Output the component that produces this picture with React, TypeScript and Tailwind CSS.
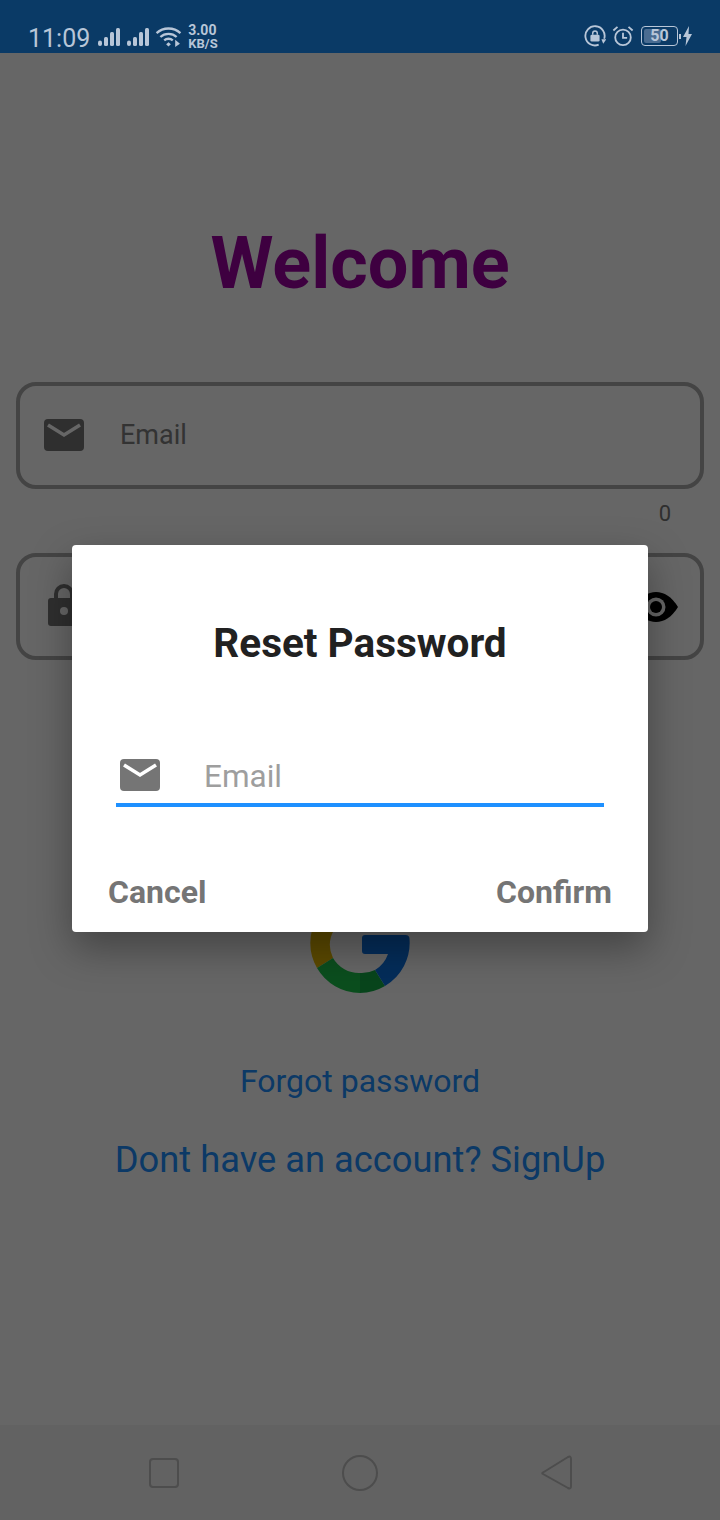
const font = { fontFamily: 'Roboto, sans-serif' }

function MailIcon({ className }: { className?: string }) {
  return (
    <svg viewBox="0 0 40 32" className={className}>
      <rect width="40" height="32" rx="4" fill="#757575" />
      <path d="M4 6l16 10L36 6" fill="none" stroke="#fff" strokeWidth="3.6" />
    </svg>
  )
}

function Signal() {
  return (
    <svg viewBox="0 0 22 18" className="w-[22px] h-[18px]" fill="#b8c6d8">
      <rect x="0" y="12.500" width="4" height="5.500" rx="2" />
      <rect x="6" y="9" width="4" height="9" rx="1.500" />
      <rect x="12" y="4" width="4" height="14" rx="1.500" />
      <rect x="18" y="0" width="4" height="18" rx="1.500" />
    </svg>
  )
}

function StatusBar() {
  return (
    <div className="h-[53px] bg-[#0a3a66] flex items-end justify-between pl-7 pr-7 text-[#b8c6d8]">
      <div className="flex items-end">
        <span className="text-[25px] leading-[28px] font-normal">11:09</span>
        <div className="flex items-center gap-[7px] ml-2 mb-[7px]"><Signal /><Signal /></div>
        <svg viewBox="0 0 28 22" className="w-[27px] h-[21px] ml-[6px] mb-[6px]" fill="none" stroke="#b8c6d8" strokeWidth="2.400">
          <path d="M1.500 7.500c7-6.500 18-6.500 25 0" />
          <path d="M5.500 11.500c4.600-4.300 12.400-4.300 17 0" />
          <path d="M9.500 15c2.500-2.200 6.500-2.200 9 0" />
          <path d="M11.500 19l2.500-2 2.500 2-2.500 2.500z" fill="#b8c6d8" stroke="none" />
          <path d="M21 14.500l5 4-5 3.500z" fill="#b8c6d8" stroke="none" />
        </svg>
        <div className="ml-[6px] mb-[3px] flex flex-col items-start text-[13px] leading-[13px] font-bold">
          <span className="text-[14px]">3.00</span>
          <span>KB/S</span>
        </div>
      </div>
      <div className="flex items-center mb-[6px]">
        <svg viewBox="0 0 24 24" className="w-[22px] h-[22px]" fill="none" stroke="#b8c6d8" strokeWidth="2">
          <path d="M16 21.500A10.500 10.500 0 1 1 22 15" />
          <path d="M19 15.500h5.500l-3.500 5z" fill="#b8c6d8" stroke="none" />
          <rect x="7" y="10.500" width="10" height="7.500" rx="1.500" fill="#b8c6d8" stroke="none" />
          <path d="M9.500 10.500V9a2.500 2.500 0 0 1 5 0v1.500" strokeWidth="1.600" />
        </svg>
        <svg viewBox="0 0 24 24" className="w-[22px] h-[22px] ml-[6px]" fill="none" stroke="#b8c6d8" strokeWidth="2">
          <circle cx="12" cy="13.500" r="8.500" />
          <path d="M12 8.500v5.500h4.500" />
          <path d="M1.500 6L6 2M22.500 6L18 2" />
        </svg>
        <div className="relative ml-[7px] w-[37px] h-5 rounded-[4px] border border-[#b8c6d8] flex items-center justify-center">
          <div className="absolute left-[2px] top-[2px] bottom-[2px] w-[17px] rounded-[2px] bg-[#4a6c91]" />
          <span className="relative text-[16px] leading-5 font-bold">50</span>
        </div>
        <div className="w-[2px] h-[5px] bg-[#b8c6d8] ml-[1px]" />
        <svg viewBox="0 0 9 20" className="w-[9px] h-5 ml-[2px]" fill="#b8c6d8">
          <path d="M6 0L0 11h3.500L2.500 20 9 8H5.500z" />
        </svg>
      </div>
    </div>
  )
}

function GoogleMark() {
  return (
    <svg viewBox="0 0 100 100" className="w-[100px] h-[100px]">
      <path d="M7 25A50 50 0 0 1 87 16L72 30A30 30 0 0 0 24 37z" fill="#e63a2e" />
      <path d="M7 25A50 50 0 0 0 7 75L23 65A30 30 0 0 1 24 37z" fill="#e6b800" />
      <path d="M7 75A50 50 0 0 0 50 100V80A30 30 0 0 1 23 65z" fill="#1cc44c" />
      <path d="M50 100A50 50 0 0 0 75 93L65 77A30 30 0 0 1 50 80z" fill="#14ad48" />
      <path d="M75 93A50 50 0 0 0 99.500 46Q99.500 42 95.500 42H55Q52 42 52 45V58Q52 61 55 61H78A30 30 0 0 1 65 77z" fill="#0c70e1" />
    </svg>
  )
}

function ResetDialog() {
  return (
    <div className="w-[576px] h-[387px] bg-white rounded-[4px] shadow-[0_16px_40px_rgba(0,0,0,0.35)] flex flex-col">
      <h2 className="mt-[73px] text-center text-[40.500px] leading-[50px] font-bold text-[#212121]">Reset Password</h2>
      <div className="mx-[44px] mt-[77px] h-[62px] pt-[2px] border-b-4 border-[#1e90ff] flex items-center">
        <MailIcon className="ml-1 w-10 h-8" />
        <span className="ml-[44px] mt-1 text-[31.500px] leading-[40px] text-[#9e9e9e]">Email</span>
      </div>
      <div className="mt-[65px] pl-9 pr-9 flex justify-between text-[32px] leading-[40px] font-bold text-[#757575]">
        <span>Cancel</span>
        <span>Confirm</span>
      </div>
    </div>
  )
}

export default function App() {
  return (
    <div className="w-[720px] h-[1520px] flex flex-col overflow-hidden bg-white" style={font}>
      <StatusBar />
      <div className="relative flex-1 flex flex-col bg-white">
        <h1 className="mt-[169px] text-center text-[72px] leading-[84px] font-bold text-[#9c00a0]">Welcome</h1>
        <div className="mx-4 mt-[76px] h-[107px] border-4 border-[#aaaaaa] rounded-[20px] flex items-center pl-6 pb-[2px]">
          <MailIcon className="w-10 h-8" />
          <span className="ml-9 text-[27px] leading-[34px] text-[#808080]">Email</span>
        </div>
        <div className="mt-[12px] h-[26px] pr-[49px] text-right text-[22px] leading-[26px] text-[#757575]">0</div>
        <div className="mx-4 mt-[26px] h-[107px] border-4 border-[#aaaaaa] rounded-[20px] flex items-center justify-between pl-7 pr-[22px]">
          <svg viewBox="0 0 32 42" className="w-8 h-[42px] mb-[4px]">
            <path d="M8 16v-6a8 8 0 0 1 16 0v6" fill="none" stroke="#757575" strokeWidth="4" />
            <path d="M3 14h26a3 3 0 0 1 3 3v22a3 3 0 0 1-3 3H3a3 3 0 0 1-3-3V17a3 3 0 0 1 3-3z" fill="#757575" />
            <circle cx="16" cy="27" r="4" fill="#fff" />
          </svg>
          <svg viewBox="0 0 44 30" className="w-11 h-[30px]">
            <path d="M0 15C6 5 14 0 22 0s16 5 22 15c-6 10-14 15-22 15S6 25 0 15z" fill="#000" />
            <circle cx="22" cy="15" r="9.500" fill="#fff" />
            <circle cx="22" cy="15" r="6" fill="#000" />
          </svg>
        </div>
        <div className="mt-[233px] flex justify-center"><GoogleMark /></div>
        <p className="mt-[68px] text-center text-[32px] leading-[40px] text-[#2090ff]">Forgot password</p>
        <p className="mt-[38px] text-center text-[36.300px] leading-[42px] text-[#2090ff]">Dont have an account? SignUp</p>
        <div className="absolute inset-0 bg-black/60" />
        <div className="absolute inset-0 pb-[2px] flex items-center justify-center">
          <ResetDialog />
        </div>
      </div>
      <div className="h-[95px] bg-[#626262] flex items-center justify-center gap-[162px] pl-[2px]">
        <svg viewBox="0 0 30 30" className="w-[30px] h-[30px]" fill="none" stroke="#4d4d4d" strokeWidth="2"><rect x="1" y="1" width="28" height="28" rx="3" /></svg>
        <svg viewBox="0 0 38 38" className="w-[38px] h-[38px]" fill="none" stroke="#4d4d4d" strokeWidth="2"><circle cx="19" cy="19" r="17" /></svg>
        <svg viewBox="0 0 32 36" className="w-8 h-9" fill="none" stroke="#4d4d4d" strokeWidth="2" strokeLinejoin="round"><path d="M2 17.500L27 2q3-1.500 3 2v27q0 3.500-3 2L2 19q-1.500-.8 0-1.500z" /></svg>
      </div>
    </div>
  )
}
